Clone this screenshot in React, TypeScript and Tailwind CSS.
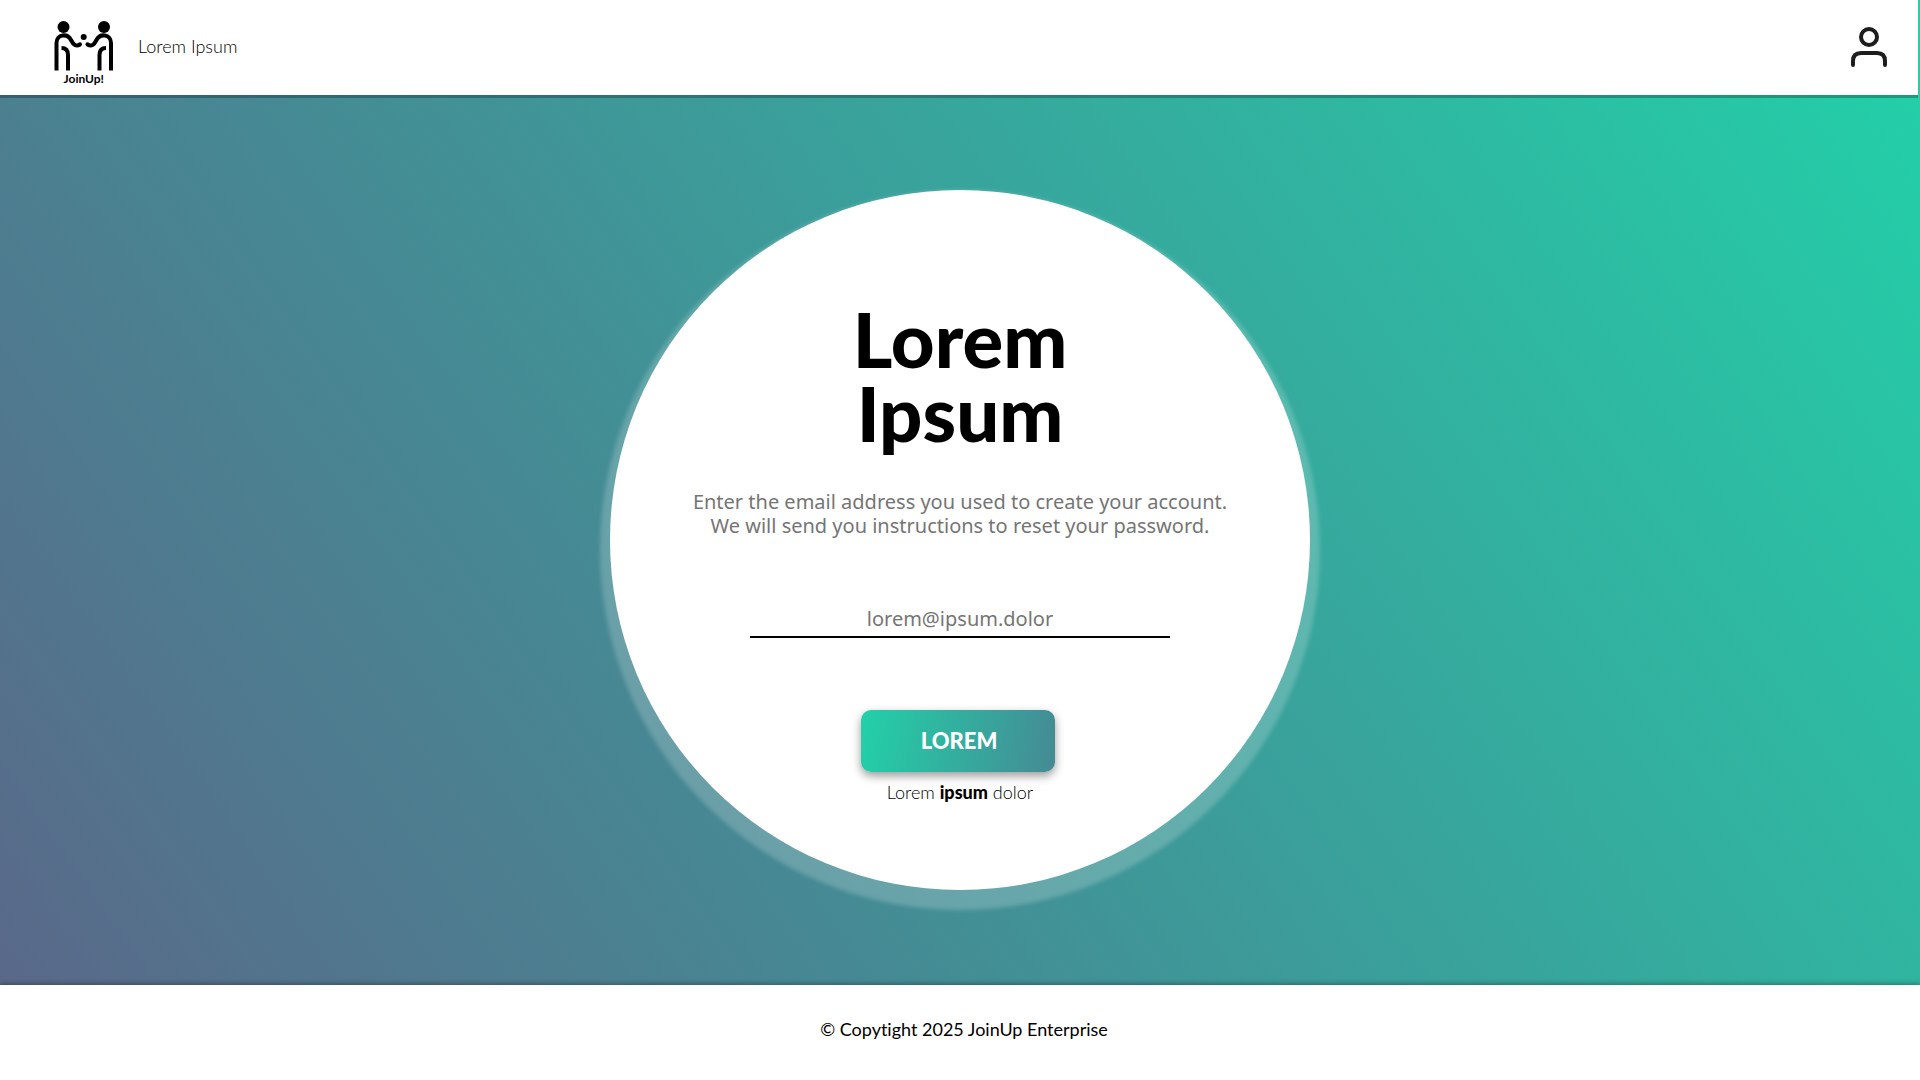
export default function App() {
  return (
    <div className="flex min-h-screen flex-col bg-[linear-gradient(55deg,#5b6688_0%,#458a94_36%,#22d1a9_100%)] font-['Lato',sans-serif] text-black">
      <header className="relative mr-0.5 flex h-[95px] items-center justify-between bg-white pr-[31px] pl-[54px] shadow-[0_3px_0_rgba(0,0,0,0.25)]">
        <div className="flex items-center gap-6">
          <a href="#" aria-label="JoinUp!" className="mt-3 block">
            <svg viewBox="0 0 60 66" className="h-[66px] w-[60px]" fill="none" stroke="#000" strokeWidth="4">
              <g id="person">
                <circle cx="9.500" cy="6" r="6" fill="#000" stroke="none" />
                <path d="M2.500 49.500V22c0-9 11-10 14.500-3 2.500 5 5 7 9 4.500" strokeLinejoin="round" />
                <circle cx="26" cy="23.300" r="2" fill="#000" stroke="none" />
                <path d="M7.500 27c5 0 6.500 3 6.500 7v15.500" />
              </g>
              <use href="#person" transform="matrix(-1 0 0 1 59.500 0)" />
              <circle cx="29.700" cy="16" r="3" fill="#000" stroke="none" />
              <text x="29.700" y="62" textAnchor="middle" fill="#000" stroke="none" fontFamily="Lato" fontWeight="700" fontSize="12">JoinUp!</text>
            </svg>
          </a>
          <a href="#" className="mb-1 text-lg font-light">Lorem Ipsum</a>
        </div>
        <button type="button" aria-label="Account" className="mb-0.5">
          <svg viewBox="0 0 36 40" className="h-10 w-9" fill="none" stroke="#1d1d1d" strokeWidth="4" strokeLinecap="round">
            <circle cx="18" cy="10" r="8" />
            <path d="M2 38v-4q0-8 8-8h16q8 0 8 8v4" />
          </svg>
        </button>
      </header>

      <main className="flex flex-1 items-center justify-center py-[95px]">
        <form className="flex size-[700px] flex-col items-center rounded-full bg-white pt-28 shadow-[0_10px_4px_10px_rgba(255,255,255,0.2)]">
          <h1 className="text-center text-[76px] leading-[74px] font-black">
            Lorem
            <br />
            Ipsum
          </h1>
          <p className="mt-10 text-center font-['Noto_Sans',sans-serif] text-xl leading-6 text-[#757575]">
            Enter the email address you used to create your account.
            <br />
            We will send you instructions to reset your password.
          </p>
          <input
            type="email"
            aria-label="Email address"
            placeholder="lorem@ipsum.dolor"
            className="mt-[58px] h-[42px] w-[420px] border-b-2 border-black pt-1 text-center font-['Noto_Sans',sans-serif] text-xl outline-none placeholder:text-[#757575]"
          />
          <button type="submit" className="mt-[72px] mr-1 h-[62px] w-[194px] rounded-[10px] bg-[linear-gradient(100deg,#22d1a9,#458a94)] pb-0.5 pl-0.5 text-[22px] font-black text-white shadow-[0_4px_10px_rgba(0,0,0,0.4)]">
            LOREM
          </button>
          <a href="#" className="mt-2 text-lg leading-6 font-light">
            Lorem <b className="font-black">ipsum</b> dolor
          </a>
        </form>
      </main>

      <footer className="flex h-[95px] items-center justify-center bg-white pb-2 pl-2 text-lg [font-variant-ligatures:none] shadow-[0_-2px_4px_rgba(0,0,0,0.25)]">
        © Copytight 2025 JoinUp Enterprise
      </footer>
    </div>
  );
}
